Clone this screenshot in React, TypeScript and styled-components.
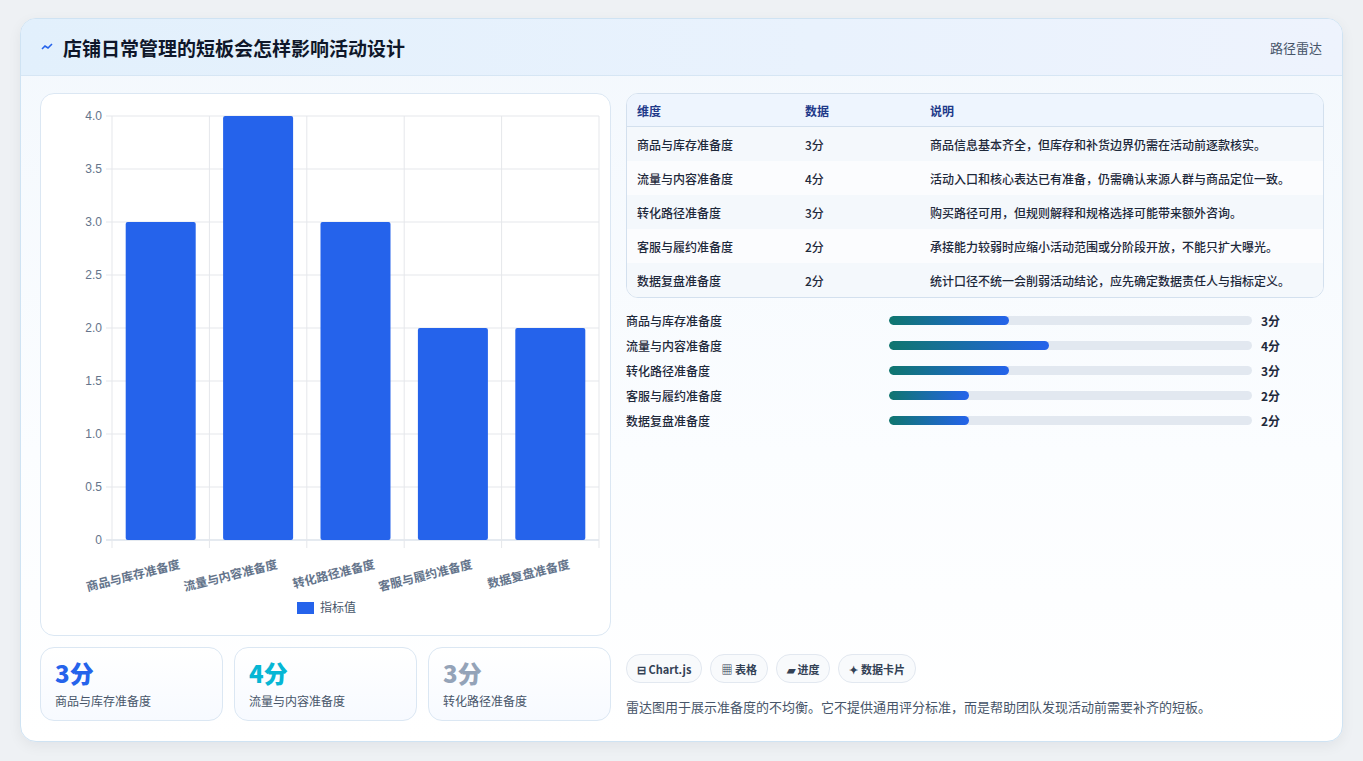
import { FC } from 'react';
import styled, { createGlobalStyle } from 'styled-components';

const GlobalStyle = createGlobalStyle`
  html, body { margin: 0; padding: 0; background: #eef1f4; }
  body { font-family: "Noto Sans CJK SC", "Noto Sans", sans-serif; color: #1e293b; }
`;

interface Item { name: string; value: number; note: string }

const items: Item[] = [
  { name: '商品与库存准备度', value: 3, note: '商品信息基本齐全，但库存和补货边界仍需在活动前逐款核实。' },
  { name: '流量与内容准备度', value: 4, note: '活动入口和核心表达已有准备，仍需确认来源人群与商品定位一致。' },
  { name: '转化路径准备度', value: 3, note: '购买路径可用，但规则解释和规格选择可能带来额外咨询。' },
  { name: '客服与履约准备度', value: 2, note: '承接能力较弱时应缩小活动范围或分阶段开放，不能只扩大曝光。' },
  { name: '数据复盘准备度', value: 2, note: '统计口径不统一会削弱活动结论，应先确定数据责任人与指标定义。' },
];

const Page = styled.div`
  padding: 18px 20px 20px 20px;
  box-sizing: border-box;
  height: 761px;
`;

const Frame = styled.div`
  height: 722px;
  border: 1px solid #cfe3f3;
  border-radius: 16px;
  background: linear-gradient(180deg, #f3f8fd 0%, #fbfdff 60%, #ffffff 100%);
  box-shadow: 0 4px 14px rgba(15, 23, 42, 0.06);
  overflow: hidden;
  display: flex;
  flex-direction: column;
`;

const Header = styled.div`
  height: 56px;
  flex-shrink: 0;
  display: flex;
  align-items: center;
  justify-content: space-between;
  padding: 0 20px;
  background: linear-gradient(90deg, #e2f0fc 0%, #e9f2fd 60%, #eef3fd 100%);
  border-bottom: 1px solid #d6e6f4;
`;

const Title = styled.h1`
  margin: 0;
  font-size: 19px;
  font-weight: 700;
  color: #0f172a;
  display: flex;
  align-items: center;
  gap: 10px;
`;

const HeaderTag = styled.span`
  font-size: 13px;
  color: #475569;
`;

const Body = styled.div`
  flex: 1;
  display: grid;
  grid-template-columns: 571px 1fr;
  gap: 15px;
  padding: 17px 18px 19px 19px;
`;

const LeftCol = styled.div`
  display: flex;
  flex-direction: column;
  gap: 11px;
`;

const ChartCard = styled.div`
  height: 543px;
  border: 1px solid #dbe7f3;
  border-radius: 14px;
  background: #ffffff;
  box-sizing: border-box;
`;

const StatRow = styled.div`
  display: grid;
  grid-template-columns: repeat(3, 1fr);
  gap: 11px;
`;

const StatCard = styled.div`
  height: 74px;
  box-sizing: border-box;
  border: 1px solid #dbe7f3;
  border-radius: 14px;
  background: linear-gradient(180deg, #ffffff, #f7faff);
  padding: 10px 14px;
`;

const StatValue = styled.div<{ $color: string }>`
  font-size: 24px;
  font-weight: 800;
  color: ${(p) => p.$color};
  line-height: 30px;
`;

const StatLabel = styled.div`
  font-size: 12px;
  color: #475569;
  margin-top: 4px;
`;

const RightCol = styled.div`
  display: flex;
  flex-direction: column;
`;

const TableWrap = styled.div`
  border: 1px solid #d3e0ee;
  border-radius: 12px;
  overflow: hidden;
  background: #ffffff;
`;

const Table = styled.table`
  width: 100%;
  border-collapse: collapse;
  font-size: 12px;
`;

const Th = styled.th`
  text-align: left;
  font-weight: 700;
  color: #1e3a8a;
  background: #eef5fe;
  height: 32px;
  padding: 0 10px;
  border-bottom: 1px solid #d3e0ee;
`;

const Tr = styled.tr<{ $odd: boolean }>`
  background: ${(p) => (p.$odd ? '#f4f8fc' : '#fbfcfe')};
  & + & td { border-top: 1px solid #e3ebf3; }
`;

const Td = styled.td`
  height: 34px;
  padding: 0 10px;
  color: #1e293b;
  font-weight: 500;
`;

const Bars = styled.div`
  margin-top: 10px;
  display: flex;
  flex-direction: column;
`;

const BarRow = styled.div`
  height: 25px;
  display: grid;
  grid-template-columns: 263px 363px 1fr;
  align-items: center;
  font-size: 12px;
  font-weight: 500;
`;

const Track = styled.div`
  height: 9px;
  border-radius: 5px;
  background: #e2e8f0;
  overflow: hidden;
`;

const Fill = styled.div`
  height: 100%;
  border-radius: 5px;
  background: linear-gradient(90deg, #0f766e, #2563eb);
`;

const BarValue = styled.span`
  padding-left: 9px;
  font-weight: 700;
`;

const Spacer = styled.div`
  flex: 1;
`;

const Chips = styled.div`
  display: flex;
  gap: 8px;
`;

const Chip = styled.span`
  height: 27px;
  padding: 0 10px;
  display: inline-flex;
  align-items: center;
  gap: 4px;
  border: 1px solid #e2e8f0;
  border-radius: 14px;
  background: #f8fafc;
  font-size: 11px;
  font-weight: 700;
  color: #334155;
`;

const Note = styled.p`
  margin: 14px 0 6px;
  font-size: 13px;
  color: #475569;
`;

const BarChart: FC = () => {
  const x0 = 71, x1 = 558, y0 = 22, y1 = 446;
  const step = (x1 - x0) / 5;
  const ticks = [0, 0.5, 1, 1.5, 2, 2.5, 3, 3.5, 4];
  const yOf = (v: number) => y1 - (v / 4) * (y1 - y0);
  return (
    <svg width="569" height="541" style={{ display: 'block' }}>
      {ticks.map((t) => (
        <g key={t}>
          <line x1={x0 - 6} x2={x1} y1={yOf(t)} y2={yOf(t)} stroke={t === 0 ? '#cbd5e1' : '#e5e7eb'} />
          <text x={x0 - 10} y={yOf(t) + 4} fontSize="12" fill="#64748b" textAnchor="end" fontFamily="Liberation Sans, sans-serif">
            {t === 0 ? '0' : t.toFixed(1)}
          </text>
        </g>
      ))}
      {[0, 1, 2, 3, 4, 5].map((i) => (
        <line key={i} x1={x0 + i * step} x2={x0 + i * step} y1={y0} y2={y1 + 8} stroke="#e5e7eb" />
      ))}
      {items.map((it, i) => {
        const cx = x0 + i * step + step / 2;
        return (
          <g key={it.name}>
            <rect x={cx - 35} y={yOf(it.value)} width="70" height={y1 - yOf(it.value)} rx="2" fill="#2563eb" />
            <text
              x={cx + 20}
              y={y1 + 28}
              fontSize="12"
              fontWeight="700"
              fill="#64748b"
              textAnchor="end"
              transform={`rotate(-14 ${cx + 20} ${y1 + 28})`}
            >
              {it.name}
            </text>
          </g>
        );
      })}
      <rect x="256" y="508" width="17" height="12" fill="#2563eb" />
      <text x="279" y="518" fontSize="12" fill="#475569">指标值</text>
    </svg>
  );
};

const statColors = ['#2563eb', '#06b6d4', '#94a3b8'];

export default function App() {
  return (
    <>
      <GlobalStyle />
      <Page>
        <Frame>
          <Header>
            <Title>
              <svg width="12" height="8" viewBox="0 0 12 8">
                <path d="M1 6 L4 3 L7 5 L11 1" fill="none" stroke="#2563eb" strokeWidth="1.6" />
              </svg>
              店铺日常管理的短板会怎样影响活动设计
            </Title>
            <HeaderTag>路径雷达</HeaderTag>
          </Header>
          <Body>
            <LeftCol>
              <ChartCard>
                <BarChart />
              </ChartCard>
              <StatRow>
                {items.slice(0, 3).map((it, i) => (
                  <StatCard key={it.name}>
                    <StatValue $color={statColors[i]}>{it.value}分</StatValue>
                    <StatLabel>{it.name}</StatLabel>
                  </StatCard>
                ))}
              </StatRow>
            </LeftCol>
            <RightCol>
              <TableWrap>
                <Table>
                  <thead>
                    <tr>
                      <Th style={{ width: 148 }}>维度</Th>
                      <Th style={{ width: 105 }}>数据</Th>
                      <Th>说明</Th>
                    </tr>
                  </thead>
                  <tbody>
                    {items.map((it, i) => (
                      <Tr key={it.name} $odd={i % 2 === 0}>
                        <Td>{it.name}</Td>
                        <Td>{it.value}分</Td>
                        <Td>{it.note}</Td>
                      </Tr>
                    ))}
                  </tbody>
                </Table>
              </TableWrap>
              <Bars>
                {items.map((it) => (
                  <BarRow key={it.name}>
                    <span>{it.name}</span>
                    <Track>
                      <Fill style={{ width: `${(it.value / 9.1) * 100}%` }} />
                    </Track>
                    <BarValue>{it.value}分</BarValue>
                  </BarRow>
                ))}
              </Bars>
              <Spacer />
              <Chips>
                <Chip>⊟ Chart.js</Chip>
                <Chip>▦ 表格</Chip>
                <Chip>▰ 进度</Chip>
                <Chip>✦ 数据卡片</Chip>
              </Chips>
              <Note>雷达图用于展示准备度的不均衡。它不提供通用评分标准，而是帮助团队发现活动前需要补齐的短板。</Note>
            </RightCol>
          </Body>
        </Frame>
      </Page>
    </>
  );
}
